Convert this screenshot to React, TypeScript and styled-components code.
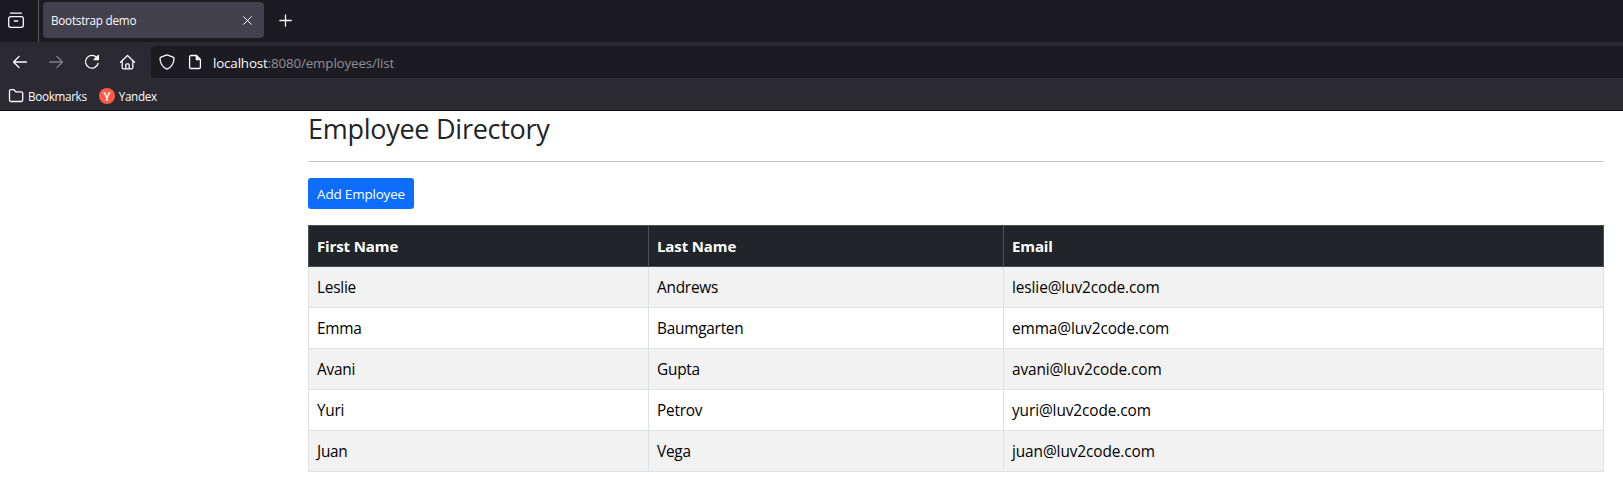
import React from 'react';
import styled, { createGlobalStyle } from 'styled-components';

const GlobalStyle = createGlobalStyle`
  *, *::before, *::after { box-sizing: border-box; }
  body {
    margin: 0;
    background: #fff;
    color: #212529;
    font-family: "Segoe UI", "Open Sans", "Noto Sans", sans-serif;
    font-size: 15.5px;
    line-height: 24px;
  }
`;

const BrowserChrome = styled.header`
  height: 111px;
  background: #2b2a33;
  border-bottom: 1px solid #0c0c0d;
  color: #fbfbfe;
  overflow: hidden;
`;

const TabStrip = styled.div`
  display: flex;
  height: 42px;
  background: #1c1b22;
`;

const TabsButton = styled.div`
  width: 39px;
  padding: 12px 0 0 7px;
  border-right: 1px solid #5b5a62;
`;

const Tab = styled.div`
  display: flex;
  align-items: center;
  justify-content: space-between;
  width: 221px;
  height: 36px;
  margin: 2px 0 0 4px;
  padding: 0 12px 0 8px;
  border-radius: 4px;
  background: #42414d;
  font-size: 11.7px;
  letter-spacing: -0.24px;
`;

const NewTab = styled.div`
  padding: 14px 0 0 15px;
`;

const Toolbar = styled.div`
  display: flex;
  align-items: center;
  height: 40px;
  padding-left: 12px;
`;

const NavButtons = styled.div`
  display: flex;
  gap: 20px;
  width: 139px;
`;

const Glyph = styled.svg<{ $dim?: boolean; $thin?: boolean }>`
  display: block;
  flex: none;
  fill: none;
  stroke: #fbfbfe;
  stroke-width: ${(p) => (p.$thin ? 1 : 1.3)};
  stroke-linecap: round;
  stroke-linejoin: round;
  opacity: ${(p) => (p.$dim ? 0.4 : 1)};
`;

const AddressBar = styled.div`
  display: flex;
  align-items: center;
  flex: 1;
  gap: 12px;
  height: 32px;
  padding-left: 8px;
  border-radius: 4px 0 0 4px;
  background: #1c1b22;
`;

const Address = styled.span`
  margin-left: -2px;
  padding-top: 2px;
  font-size: 13.4px;
  letter-spacing: -0.16px;
  color: #8f8f96;
`;

const Host = styled.span`
  color: #fbfbfe;
`;

const BookmarksBar = styled.div`
  display: flex;
  align-items: center;
  gap: 12px;
  height: 28px;
  padding-left: 8px;
`;

const Bookmark = styled.div`
  display: flex;
  align-items: center;
  gap: 4px;
  font-size: 11.7px;
  letter-spacing: -0.32px;
`;

const YandexBadge = styled.span`
  width: 16px;
  height: 16px;
  border-radius: 50%;
  background: #fc5a45;
  color: #fff;
  font-size: 12.5px;
  font-weight: 600;
  line-height: 17px;
  text-align: center;
`;

const Page = styled.main`
  width: 1296px;
  margin-left: 308px;
`;

const Title = styled.h3`
  height: 34px;
  margin: 0;
  padding-top: 1px;
  font-size: 27px;
  font-weight: 400;
  line-height: 34px;
  letter-spacing: -0.27px;
`;

const Rule = styled.hr`
  height: 1px;
  margin: 16px 0;
  border: 0;
  background: #c7c8c9;
`;

const AddButton = styled.button`
  display: block;
  width: 106px;
  height: 31px;
  margin: 0 0 16px;
  padding: 2px 0 0;
  border: 0;
  border-radius: 3px;
  background: #0d6efd;
  color: #fff;
  font-family: inherit;
  font-size: 13.5px;
  line-height: 21px;
  letter-spacing: -0.2px;
  white-space: nowrap;
`;

const Table = styled.table`
  width: 100%;
  table-layout: fixed;
  border-collapse: collapse;
`;

const HeadCell = styled.th<{ $width?: number }>`
  width: ${(p) => (p.$width ? `${p.$width}px` : 'auto')};
  height: 41px;
  padding: 0 8px;
  border: 1px solid #4d5154;
  background: #212529;
  color: #fff;
  font-size: 15px;
  font-weight: 700;
  letter-spacing: -0.12px;
  text-align: left;
`;

const Row = styled.tr`
  background: #fff;
  &:nth-child(odd) { background: #f2f2f2; }
`;

const Cell = styled.td<{ $loose?: boolean }>`
  height: 41px;
  padding: 2px 8px 0;
  border: 1px solid #dee2e6;
  color: #000;
  font-size: 15.4px;
  letter-spacing: ${(p) => (p.$loose ? '-0.1px' : '-0.25px')};
`;

const employees = [
  { first: 'Leslie', last: 'Andrews', email: 'leslie@luv2code.com' },
  { first: 'Emma', last: 'Baumgarten', email: 'emma@luv2code.com' },
  { first: 'Avani', last: 'Gupta', email: 'avani@luv2code.com' },
  { first: 'Yuri', last: 'Petrov', email: 'yuri@luv2code.com' },
  { first: 'Juan', last: 'Vega', email: 'juan@luv2code.com' },
];

export default function App() {
  return (
    <>
      <GlobalStyle />
      <BrowserChrome>
        <TabStrip>
          <TabsButton>
            <Glyph width="18" height="17" viewBox="0 0 18 17">
              <path d="M3.5 1.2h11M1.7 6.7a2 2 0 0 1 2-2h10.6a2 2 0 0 1 2 2v6.6a2 2 0 0 1-2 2H3.7a2 2 0 0 1-2-2zM7.3 9h3.4" />
            </Glyph>
          </TabsButton>
          <Tab>
            <span>Bootstrap demo</span>
            <Glyph width="9" height="9" viewBox="0 0 9 9" $thin>
              <path d="M.7.7l7.6 7.6M8.3.7L.7 8.3" />
            </Glyph>
          </Tab>
          <NewTab>
            <Glyph width="13" height="13" viewBox="0 0 13 13">
              <path d="M6.5.8v11.4M.8 6.5h11.4" />
            </Glyph>
          </NewTab>
        </TabStrip>
        <Toolbar>
          <NavButtons>
            <Glyph width="16" height="16" viewBox="0 0 16 16">
              <path d="M7 2.5L1.5 8 7 13.5M1.5 8h13" />
            </Glyph>
            <Glyph width="16" height="16" viewBox="0 0 16 16" $dim>
              <path d="M9 2.5L14.5 8 9 13.5M14.5 8h-13" />
            </Glyph>
            <Glyph width="16" height="16" viewBox="0 0 16 16">
              <path d="M12.8 3.6A6.4 6.4 0 1 0 14.1 9.5" />
              <path d="M14.3 1.5v4.2h-4.2z" fill="#fbfbfe" />
            </Glyph>
            <Glyph width="16" height="16" viewBox="0.5 0 16 16">
              <path d="M1 8.2l7-6.7 7 6.7M2.7 6.8v6.7A1.3 1.3 0 0 0 4 14.8h8a1.3 1.3 0 0 0 1.3-1.3V6.8M6.3 14.5v-3.7a1 1 0 0 1 1-1h1.4a1 1 0 0 1 1 1v3.7" />
            </Glyph>
          </NavButtons>
          <AddressBar>
            <Glyph width="16" height="16" viewBox="0 0 16 16">
              <path d="M8 .9L14 3.1c.7.3 1 .7 1 1.4C14.8 9.5 12.5 13.3 8 15.2 3.5 13.3 1.2 9.5 1 4.5c0-.7.3-1.1 1-1.4z" />
            </Glyph>
            <Glyph width="16" height="16" viewBox="0 0 16 16">
              <path d="M9.5 1.5H3.9a1.3 1.3 0 0 0-1.3 1.3v10.4a1.3 1.3 0 0 0 1.3 1.3h8.2a1.3 1.3 0 0 0 1.3-1.3V5.5z" />
              <path d="M9.3 1.7v4h4z" fill="#fbfbfe" />
            </Glyph>
            <Address><Host>localhost</Host>:8080/employees/list</Address>
          </AddressBar>
        </Toolbar>
        <BookmarksBar>
          <Bookmark>
            <Glyph width="16" height="16" viewBox="0 0 16 16">
              <path d="M1.5 12V3a1.3 1.3 0 0 1 1.3-1.3h3l2 2.1h5.4a1.5 1.5 0 0 1 1.5 1.5V12a1.5 1.5 0 0 1-1.5 1.5H3A1.5 1.5 0 0 1 1.5 12z" />
            </Glyph>
            <span>Bookmarks</span>
          </Bookmark>
          <Bookmark>
            <YandexBadge>Y</YandexBadge>
            <span>Yandex</span>
          </Bookmark>
        </BookmarksBar>
      </BrowserChrome>
      <Page>
        <Title>Employee Directory</Title>
        <Rule />
        <AddButton>Add Employee</AddButton>
        <Table>
          <thead>
            <tr>
              <HeadCell $width={340}>First Name</HeadCell>
              <HeadCell $width={355}>Last Name</HeadCell>
              <HeadCell>Email</HeadCell>
            </tr>
          </thead>
          <tbody>
            {employees.map((e) => (
              <Row key={e.email}>
                <Cell>{e.first}</Cell>
                <Cell>{e.last}</Cell>
                <Cell $loose>{e.email}</Cell>
              </Row>
            ))}
          </tbody>
        </Table>
      </Page>
    </>
  );
}
